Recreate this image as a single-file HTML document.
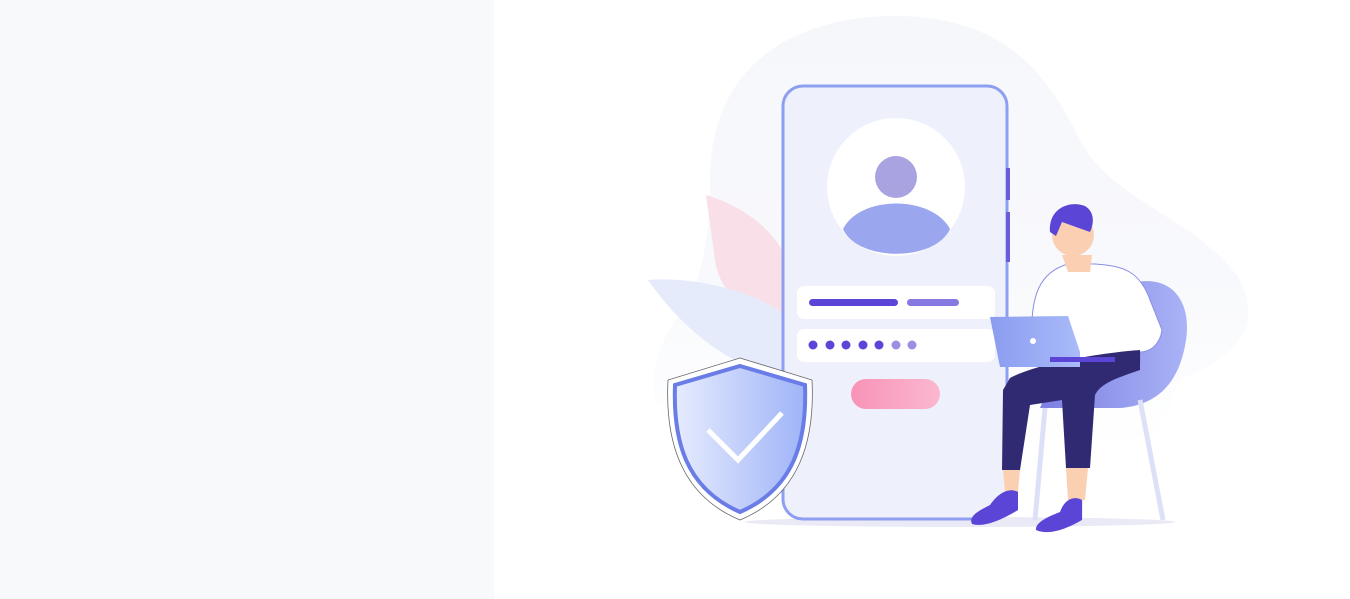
<!DOCTYPE html>
<html><head><meta charset="utf-8"><style>
html,body{margin:0;padding:0;width:1350px;height:599px;overflow:hidden;background:#fff}
.l{position:absolute;left:0;top:0;width:494px;height:599px;background:#f8f9fb}
svg{position:absolute;left:0;top:0}
</style></head><body>
<div class="l"></div>
<svg width="1350" height="599" viewBox="0 0 1350 599">
<defs>
<linearGradient id="sh" x1="0" x2="1"><stop offset="0" stop-color="#e6ebfd"/><stop offset="1" stop-color="#9fb4f8"/></linearGradient>
<linearGradient id="lp" x1="0" x2="1"><stop offset="0" stop-color="#8b9cf0"/><stop offset="1" stop-color="#a9bbf9"/></linearGradient>
<linearGradient id="bt" x1="0" x2="1"><stop offset="0" stop-color="#f893b7"/><stop offset="1" stop-color="#fbb7cf"/></linearGradient>
<linearGradient id="ch" x1="0" x2="1"><stop offset="0" stop-color="#7d7fe2"/><stop offset="1" stop-color="#a9b3f6"/></linearGradient>
<linearGradient id="bl" x1="0" y1="0" x2="0" y2="1"><stop offset="0" stop-color="#f6f7fb"/><stop offset="0.6" stop-color="#f8f9fc"/><stop offset="1" stop-color="#fff"/></linearGradient>
</defs>
<path d="M710 180 C710 60 800 15 900 16 C1010 18 1050 80 1080 140 C1110 200 1200 220 1240 280 C1265 330 1230 360 1180 380 L1150 450 L700 450 C640 420 640 360 690 300 C705 260 710 230 710 180Z" fill="url(#bl)"/>
<ellipse cx="960" cy="522" rx="215" ry="5" fill="#e9eaf6"/>
<path d="M706 195 C740 205 780 230 790 270 L790 330 C760 320 720 300 715 260Z" fill="#f9dfe7"/>
<path d="M648 280 C690 276 760 290 790 320 L790 380 C740 370 690 340 648 280Z" fill="#e6ebfc"/>
<rect x="783" y="86" width="224" height="433" rx="20" fill="#eef1fc" stroke="#8e9ef0" stroke-width="3"/>
<rect x="1006" y="168" width="4" height="32" fill="#6a5cd8"/>
<rect x="1006" y="212" width="4" height="50" fill="#6a5cd8"/>
<circle cx="896" cy="187" r="69" fill="#fff"/>
<circle cx="896" cy="177" r="21" fill="#a9a3e1"/>
<path d="M843 229 C860 195 932 195 950 229 C935 262 858 262 843 229Z" fill="#9aa6ee"/>
<rect x="797" y="286" width="198" height="33" rx="7" fill="#fff"/>
<rect x="809" y="299" width="89" height="7" rx="3.5" fill="#5a45d6"/>
<rect x="907" y="299" width="52" height="7" rx="3.5" fill="#8578e0"/>
<rect x="797" y="329" width="198" height="33" rx="7" fill="#fff"/>
<g fill="#5a45d6"><circle cx="813" cy="345" r="4.5"/><circle cx="830" cy="345" r="4.5"/><circle cx="846" cy="345" r="4.5"/><circle cx="863" cy="345" r="4.5"/><circle cx="879" cy="345" r="4.5"/></g>
<g fill="#9b8fe4"><circle cx="896" cy="345" r="4.5"/><circle cx="912" cy="345" r="4.5"/></g>
<rect x="851" y="379" width="89" height="30" rx="15" fill="url(#bt)"/>
<path d="M740 358 L812 380 C815 440 800 495 740 520 C680 495 665 440 668 380Z" fill="#fff" stroke="#666" stroke-width="0.8"/>
<path d="M740 366 L805 385 C807 440 795 488 740 512 C685 488 673 440 675 385Z" fill="url(#sh)" stroke="#6a7de6" stroke-width="4"/>
<path d="M708 430 L738 460 L782 413" fill="none" stroke="#fff" stroke-width="5"/>
<path d="M1125 285 C1170 270 1192 300 1186 340 C1180 380 1160 405 1120 408 L1040 408 L1060 360Z" fill="url(#ch)"/>
<path d="M1045 408 L1035 520 M1082 408 L1080 520 M1140 400 L1163 520" stroke="#dde1f8" stroke-width="5"/>
<path d="M1032 340 C1030 295 1040 272 1068 264 L1095 264 C1125 266 1140 272 1150 300 L1162 330 C1160 345 1150 352 1140 352 L1140 362 L1040 372Z" fill="#fff" stroke="#8a8fe6" stroke-width="1"/>
<path d="M1062 255 L1068 272 L1090 272 L1092 255Z" fill="#fbd0b2"/>
<circle cx="1073" cy="235" r="21" fill="#fbd0b2"/>
<path d="M1050 232 C1048 208 1070 200 1085 206 C1095 212 1094 224 1090 232 L1062 222 L1056 236Z" fill="#5a45d6"/>
<path d="M1010 378 C1040 362 1110 352 1140 350 L1140 370 C1110 380 1100 385 1095 395 L1090 468 L1066 468 L1062 400 L1030 405 L1020 470 L1002 470 L1003 390Z" fill="#302a72"/>
<path d="M1003 470 L1020 470 L1018 492 L1005 492Z M1066 468 L1088 468 L1085 500 L1068 500Z" fill="#fbd0b2"/>
<path d="M990 505 C1000 490 1012 488 1018 492 L1018 510 C1005 518 985 528 972 524 C968 516 980 510 990 505Z" fill="#5a45d6"/>
<path d="M1060 512 C1065 498 1075 496 1082 500 L1082 520 C1068 528 1050 536 1036 530 C1035 522 1050 516 1060 512Z" fill="#5a45d6"/>
<path d="M990 317 L1068 316 L1080 352 L1080 367 L1000 367Z" fill="url(#lp)"/>
<rect x="1050" y="357" width="65" height="5" fill="#5a45d6"/>
<circle cx="1033" cy="341" r="3" fill="#fff"/>
</svg>
</body></html>
